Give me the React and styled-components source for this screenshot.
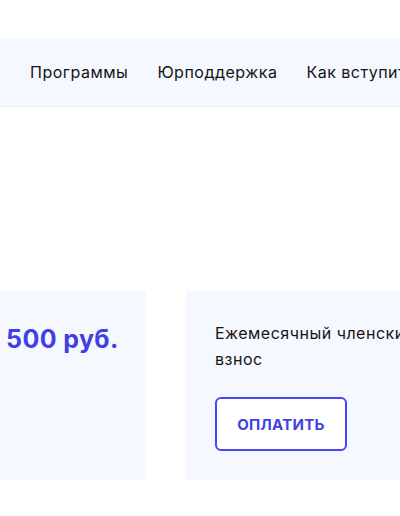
import { createGlobalStyle, styled } from "styled-components";

const GlobalStyle = createGlobalStyle`
  html, body {
    margin: 0;
    padding: 0;
    background: #fff;
    overflow: hidden;
  }
  body {
    font-family: Inter, "Noto Sans", "Liberation Sans", sans-serif;
    color: #111;
  }
`;

const Page = styled.div`
  width: 400px;
  height: 516px;
  overflow: hidden;
  padding-top: 38px;
  box-sizing: border-box;
`;

const Header = styled.header`
  height: 68px;
  background: #f5f8fe;
  border-bottom: 1px solid #e9ebf0;
  display: flex;
  align-items: center;
  padding-left: 30px;
  gap: 29px;
  white-space: nowrap;
`;

const NavLink = styled.a`
  font-size: 16px;
  line-height: 20px;
  letter-spacing: 0.5px;
  color: #141414;
  text-decoration: none;
  flex-shrink: 0;
`;

const Cards = styled.section`
  display: flex;
  gap: 40px;
  margin-top: 184px;
  margin-left: -23px;
`;

const Card = styled.div`
  flex-shrink: 0;
  width: ${(p) => p.$width}px;
  height: 189px;
  box-sizing: border-box;
  background: #f5f8fe;
  padding: 32px 20px 29px 29px;
`;

const Price = styled.div`
  font-size: 25px;
  line-height: 32px;
  font-weight: 700;
  letter-spacing: 0.4px;
  white-space: nowrap;
  color: #4141e2;
`;

const Label = styled.p`
  margin: -3px 0 0;
  font-size: 16px;
  line-height: 26px;
  letter-spacing: 0.5px;
  white-space: nowrap;
  color: #141414;
`;

const PayButton = styled.button`
  margin-top: 25px;
  width: 132px;
  height: 54px;
  border: 2px solid #4848ea;
  border-radius: 6px;
  background: #fff;
  color: #4141e2;
  font-family: inherit;
  font-size: 15px;
  font-weight: 700;
  letter-spacing: 0.3px;
  cursor: pointer;
`;

export default function App() {
  const links = ["Программы", "Юрподдержка", "Как вступить"];

  return (
    <>
      <GlobalStyle />
      <Page>
        <Header>
          {links.map((link) => (
            <NavLink key={link} href="#">
              {link}
            </NavLink>
          ))}
        </Header>
        <Cards>
          <Card $width={169}>
            <Price>500 руб.</Price>
          </Card>
          <Card $width={300}>
            <Label>
              Ежемесячный членский
              <br />
              взнос
            </Label>
            <PayButton>ОПЛАТИТЬ</PayButton>
          </Card>
        </Cards>
      </Page>
    </>
  );
}
